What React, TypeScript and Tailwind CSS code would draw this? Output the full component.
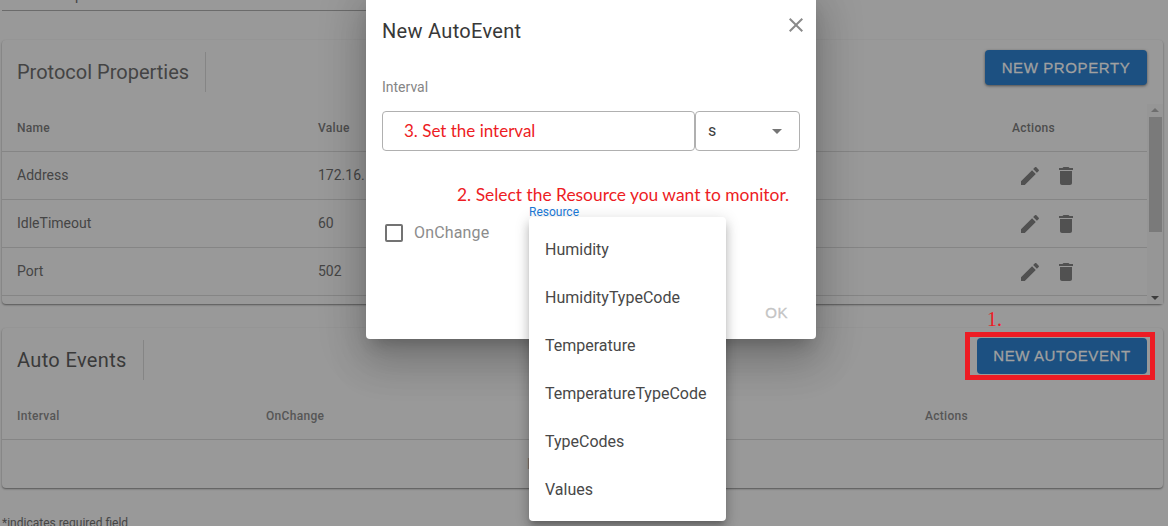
const FONT_CLASS = "font-['Roboto','Liberation_Sans',sans-serif]";
const NOTE_CLASS = "font-['Lato','Open_Sans',sans-serif] leading-[20px] text-[#ed1c24]";
const BUTTON_TEXT_CLASS = "font-['Liberation_Sans',sans-serif] text-[15px] tracking-[0.6px] [-webkit-text-stroke:0.3px]";

const PROPERTY_ROWS = [
  { name: "Address", value: "172.16." },
  { name: "IdleTimeout", value: "60" },
  { name: "Port", value: "502" },
];

const RESOURCES = [
  "Humidity",
  "HumidityTypeCode",
  "Temperature",
  "TemperatureTypeCode",
  "TypeCodes",
  "Values",
];

const EditIcon = () => (
  <svg viewBox="0 0 24 24" className="h-6 w-6 fill-[#515151]">
    <path d="M3 17.25V21h3.75L17.81 9.94l-3.75-3.75L3 17.25zM20.71 7.04c.39-.39.39-1.02 0-1.41l-2.34-2.34c-.39-.39-1.02-.39-1.41 0l-1.83 1.83 3.75 3.75 1.83-1.83z" />
  </svg>
);

const DeleteIcon = () => (
  <svg viewBox="0 0 24 24" className="h-6 w-6 fill-[#515151]">
    <path d="M6 19c0 1.1.9 2 2 2h8c1.1 0 2-.9 2-2V7H6v12zM19 4h-3.5l-1-1h-5l-1 1H5v2h14V4z" />
  </svg>
);

const Card = ({ className, children }: { className: string; children: React.ReactNode }) => (
  <section className={`shrink-0 rounded bg-[#999] pt-3 shadow-[0_1px_2px_rgba(0,0,0,0.45)] ${className}`}>
    {children}
  </section>
);

const CardHeader = ({
  title,
  titleClass,
  action,
  buttonClass,
}: {
  title: string;
  titleClass: string;
  action: string;
  buttonClass: string;
}) => (
  <div className="flex items-start justify-between pl-[15px] pr-4">
    <div className="flex h-10 items-center">
      <h2 className={`pr-4 text-[20px] leading-none ${titleClass}`}>{title}</h2>
      <div className="h-10 w-px bg-[#858585]" />
    </div>
    <button className={`-mt-0.5 rounded bg-[#1c5081] text-[#a0a0a0] ${BUTTON_TEXT_CLASS} ${buttonClass}`}>
      {action}
    </button>
  </div>
);

const Backdrop = () => (
  <div className="flex h-[526px] flex-col pl-[2px] pr-[5px] text-[#454545]">
    <div className="h-[11px] w-[500px] shrink-0 border-b border-[#6b6b6b]">
      <span className="-mt-[13px] block pl-[73px] text-[14px] leading-[16px]">p</span>
    </div>

    <Card className="mt-[29px] h-[264px]">
      <CardHeader
        title="Protocol Properties"
        titleClass="text-[#444444]"
        action="NEW PROPERTY"
        buttonClass="h-[35px] w-[162px] pt-px shadow-[0_1px_3px_rgba(0,0,0,0.5)]"
      />
      <div className="mt-3 flex h-[200px] overflow-hidden">
        <div className="min-w-0 flex-1">
          <div className="grid h-[48px] grid-cols-[301px_694px_1fr] items-center border-b border-[#858585] pl-[15px] text-[12px] font-medium tracking-[0.3px] text-[#4d4d4d]">
            <span>Name</span>
            <span>Value</span>
            <span>Actions</span>
          </div>
          {PROPERTY_ROWS.map((row) => (
            <div
              key={row.name}
              className="grid h-[48px] grid-cols-[301px_694px_1fr] items-center border-b border-[#858585] pl-[15px] text-[14px] text-[#454545]"
            >
              <span>{row.name}</span>
              <span>{row.value}</span>
              <span className="flex gap-3 pl-[6px]">
                <EditIcon />
                <DeleteIcon />
              </span>
            </div>
          ))}
        </div>
        <div className="flex w-4 shrink-0 flex-col items-center justify-between bg-[#969696] py-1">
          <div className="h-0 w-0 border-x-[4px] border-b-[4px] border-x-transparent border-b-[#6e6e6e]" />
          <div className="mb-auto mt-[5px] h-[115px] w-[13px] bg-[#7a7a7a]" />
          <div className="h-0 w-0 border-x-[4px] border-t-[4px] border-x-transparent border-t-[#3d3d3d]" />
        </div>
      </div>
    </Card>

    <Card className="mt-6 h-[160px]">
      <CardHeader
        title="Auto Events"
        titleClass="tracking-[0.35px] text-[#3a3a3a]"
        action="NEW AUTOEVENT"
        buttonClass="h-9 w-[170px]"
      />
      <div className="mt-3 grid h-[48px] grid-cols-[249px_659px_1fr] items-center border-b border-[#858585] pl-[15px] text-[12px] font-medium tracking-[0.3px] text-[#565656]">
        <span>Interval</span>
        <span>OnChange</span>
        <span>Actions</span>
      </div>
      <div className="flex h-[48px] items-center pl-[525px] text-[14px] text-[#6a6a6a]">No data</div>
    </Card>

    <p className="mt-7 text-[12px] leading-[14px] text-[#454545]">*indicates required field</p>
  </div>
);

const Dialog = () => (
  <div className="absolute left-[366px] top-[-10px] h-[349px] w-[450px] rounded bg-white px-4 pt-[26px] shadow-[0_11px_15px_-7px_rgba(0,0,0,0.2),0_24px_38px_3px_rgba(0,0,0,0.14),0_9px_46px_8px_rgba(0,0,0,0.12)]">
    <div className="flex items-start justify-between">
      <h1 className="text-[20px] leading-[30px] tracking-[0.3px] text-[#383838]">New AutoEvent</h1>
      <svg viewBox="0 0 24 24" className="mt-[-3px] h-6 w-6 translate-x-[8px] fill-[#8a8a8a]">
        <path d="M19 6.41 17.59 5 12 10.59 6.41 5 5 6.41 10.59 12 5 17.59 6.41 19 12 13.41 17.59 19 19 17.59 13.41 12z" />
      </svg>
    </div>
    <p className="mt-[33px] text-[14px] leading-[16px] text-[#858585]">Interval</p>
    <div className="mt-4 flex h-10">
      <div className={`flex w-[313px] items-center rounded border border-[#b0b0b0] pl-[21px] text-[17px] ${NOTE_CLASS}`}>
        3. Set the interval
      </div>
      <div className="flex w-[105px] items-center justify-between rounded border border-[#b0b0b0] pl-3 pr-[17px] text-[16px] text-[#3d3d3d]">
        <span>s</span>
        <div className="h-0 w-0 border-x-[5px] border-t-[5px] border-x-transparent border-t-[#757575]" />
      </div>
    </div>
    <p className={`mt-[34px] pl-[75px] text-[17.4px] ${NOTE_CLASS}`}>2. Select the Resource you want to monitor.</p>
    <div className="mt-4 flex items-center gap-[11px] pl-[3px] text-[16px] tracking-[0.15px] text-[#8c8c8c]">
      <div className="h-[18px] w-[18px] rounded-[2px] border-2 border-[#737373]" />
      <span>OnChange</span>
    </div>
    <div className={`absolute bottom-[15px] right-[28px] text-[#c4c4c4] ${BUTTON_TEXT_CLASS}`}>OK</div>
  </div>
);

const ResourceMenu = () => (
  <div className="absolute left-[529px] top-[204px]">
    <label className="block h-[13px] text-[12px] leading-[16px] text-[#1976d2]">Resource</label>
    <ul className="w-[197px] rounded bg-white pb-[7px] pt-[9px] text-[16px] text-[#484848] shadow-[0_5px_5px_-3px_rgba(0,0,0,0.2),0_8px_10px_1px_rgba(0,0,0,0.14),0_3px_14px_2px_rgba(0,0,0,0.12)]">
      {RESOURCES.map((resource) => (
        <li key={resource} className="flex h-12 items-center pl-4">
          {resource}
        </li>
      ))}
    </ul>
  </div>
);

export default function App() {
  return (
    <div className={`relative h-[526px] w-[1168px] overflow-hidden bg-[#999] ${FONT_CLASS}`}>
      <Backdrop />
      <div className="absolute left-[987px] top-[309px] font-['Liberation_Serif',serif] text-[20px] leading-[20px] text-[#ed1c24]">
        1.
      </div>
      <div className="absolute left-[965px] top-[332px] h-[48px] w-[190px] border-[5px] border-[#ed1c24]" />
      <Dialog />
      <ResourceMenu />
    </div>
  );
}
